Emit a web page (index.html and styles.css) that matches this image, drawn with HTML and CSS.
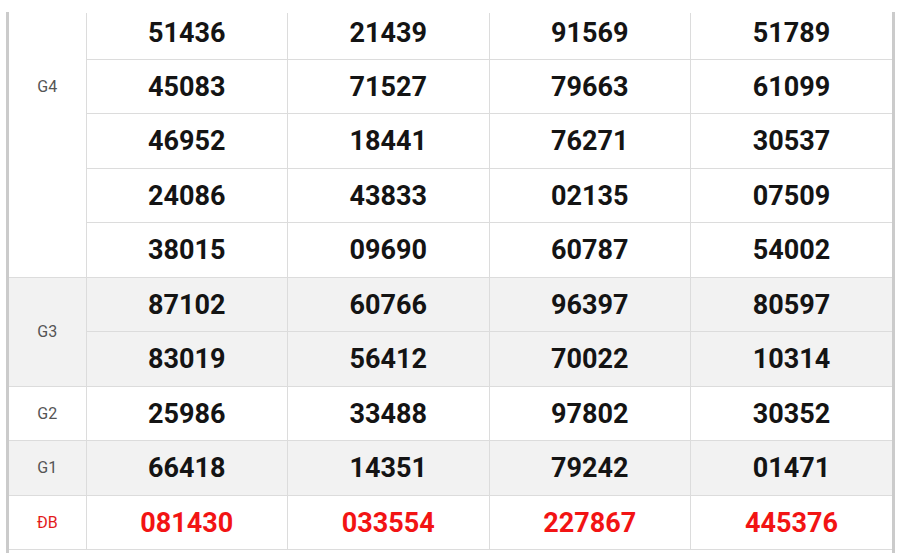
FILE: index.html
```html
<!DOCTYPE html>
<html lang="vi">
<head>
<meta charset="utf-8">
<link rel="stylesheet" href="styles.css">
</head>
<body>
<div class="wrap">
<table class="kq">
<colgroup><col class="c-label"><col><col><col><col></colgroup>
<tbody>
<tr class="first">
  <td class="label g4" rowspan="5">G4</td>
  <td>51436</td><td>21439</td><td>91569</td><td>51789</td>
</tr>
<tr><td>45083</td><td>71527</td><td>79663</td><td>61099</td></tr>
<tr><td>46952</td><td>18441</td><td>76271</td><td>30537</td></tr>
<tr><td>24086</td><td>43833</td><td>02135</td><td>07509</td></tr>
<tr><td>38015</td><td>09690</td><td>60787</td><td>54002</td></tr>
<tr class="alt">
  <td class="label" rowspan="2">G3</td>
  <td>87102</td><td>60766</td><td>96397</td><td>80597</td>
</tr>
<tr class="alt"><td>83019</td><td>56412</td><td>70022</td><td>10314</td></tr>
<tr><td class="label">G2</td><td>25986</td><td>33488</td><td>97802</td><td>30352</td></tr>
<tr class="alt"><td class="label">G1</td><td>66418</td><td>14351</td><td>79242</td><td>01471</td></tr>
<tr class="db"><td class="label">ĐB</td><td>081430</td><td>033554</td><td>227867</td><td>445376</td></tr>
</tbody>
</table>
</div>
</body>
</html>
```
FILE: styles.css
```css
html, body {
  margin: 0;
  padding: 0;
  background: #fff;
}
body {
  font-family: Roboto, "Liberation Sans", sans-serif;
}
.wrap {
  margin: 12px 0 0 6px;
  width: 889px;
  height: 541px;
  padding-top: 1px;
  box-sizing: border-box;
  border-left: 3px solid #cbcbcb;
  border-right: 3px solid #cbcbcb;
}
.kq {
  width: 883px;
  table-layout: fixed;
  border-collapse: collapse;
}
.c-label {
  width: 77px;
}
.kq tr {
  height: 54.5px;
}
.kq tr.first {
  height: 46px;
}
.kq td {
  padding: 1px 0 0;
  text-align: center;
  vertical-align: middle;
  border: 1px solid #dcdcdc;
  font-size: 27px;
  font-weight: 700;
  color: #141414;
  line-height: 30px;
}
.kq tr:first-child td {
  border-top: none;
  padding: 0 0 6px;
}
.kq td:first-child {
  border-left: none;
}
.kq td:last-child {
  border-right: none;
}
.kq tr.alt td {
  background: #f2f2f2;
}
.kq td.label {
  font-size: 16px;
  font-weight: 400;
  color: #555;
  line-height: 18px;
}
.kq td.label.g4 {
  vertical-align: top;
  padding: 65px 0 0;
}
.kq tr.db td {
  color: #f21414;
}
.kq tr.db td.label {
  color: #e31b1b;
}
```
